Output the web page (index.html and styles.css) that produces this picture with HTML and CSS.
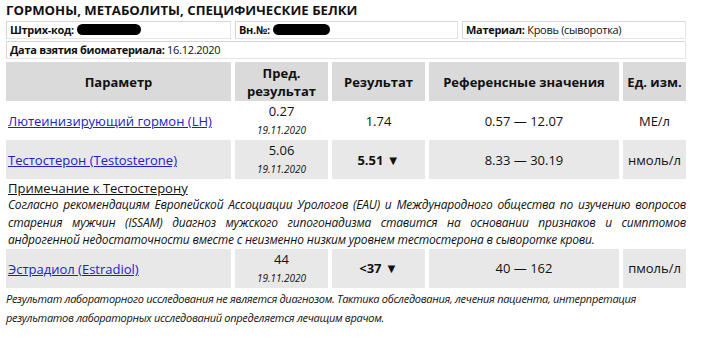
FILE: index.html
```html
<!DOCTYPE html>
<html lang="ru">
<head>
<meta charset="utf-8">
<link rel="stylesheet" href="styles.css">
</head>
<body>
<div class="page">
  <h1 class="title">ГОРМОНЫ, МЕТАБОЛИТЫ, СПЕЦИФИЧЕСКИЕ БЕЛКИ</h1>
  <div class="info">
    <div class="box"><b>Штрих-код:</b> <span class="redact r1"></span></div>
    <div class="box"><b>Вн.№:</b> <span class="redact r2"></span></div>
    <div class="box"><b>Материал:</b> Кровь (сыворотка)</div>
  </div>
  <div class="box wide"><b>Дата взятия биоматериала:</b> 16.12.2020</div>

  <div class="grid">
    <div class="hd">Параметр</div>
    <div class="hd">Пред.<br>результат</div>
    <div class="hd">Результат</div>
    <div class="hd">Референсные значения</div>
    <div class="hd">Ед. изм.</div>

    <div class="c name"><a href="#">Лютеинизирующий гормон (LH)</a></div>
    <div class="c prev"><span>0.27</span><i>19.11.2020</i></div>
    <div class="c">1.74</div>
    <div class="c">0.57 — 12.07</div>
    <div class="c">МЕ/л</div>

    <div class="c name g"><a href="#">Тестостерон (Testosterone)</a></div>
    <div class="c prev g"><span>5.06</span><i>19.11.2020</i></div>
    <div class="c g b">5.51 ▼</div>
    <div class="c g">8.33 — 30.19</div>
    <div class="c g">нмоль/л</div>
  </div>

  <div class="note">
    <div class="note-title">Примечание к Тестостерону</div>
    <p class="note-text">Согласно рекомендациям Европейской Ассоциации Урологов (EAU) и Международного общества по изучению вопросов старения мужчин (ISSAM) диагноз мужского гипогонадизма ставится на основании признаков и симптомов андрогенной недостаточности вместе с неизменно низким уровнем тестостерона в сыворотке крови.</p>
  </div>

  <div class="grid grid2">
    <div class="c name g"><a href="#">Эстрадиол (Estradiol)</a></div>
    <div class="c prev g"><span>44</span><i>19.11.2020</i></div>
    <div class="c g b">&lt;37 ▼</div>
    <div class="c g">40 — 162</div>
    <div class="c g">пмоль/л</div>
  </div>

  <p class="foot">Результат лабораторного исследования не является диагнозом. Тактика обследования, лечения пациента, интерпретация результатов лабораторных исследований определяется лечащим врачом.</p>
</div>
</body>
</html>
```

FILE: styles.css
```css
html, body {
  margin: 0;
  padding: 0;
  background: #fff;
}
*, *::before, *::after {
  box-sizing: border-box;
}
body {
  font-family: "Open Sans", "Noto Sans", sans-serif;
  color: #111;
  font-size: 12px;
}
.page {
  width: 686px;
  padding: 2px 0 0 6px;
}
.title {
  margin: 0;
  font-size: 13.2px;
  font-weight: 700;
  line-height: 16px;
  height: 19px;
}
.info {
  display: grid;
  grid-template-columns: 225px 223px 224px;
  column-gap: 4px;
  margin-bottom: 2px;
}
.box {
  border: 1px solid #d6d6d6;
  border-right-color: #e4e4e4;
  border-bottom-color: #e4e4e4;
  height: 18px;
  line-height: 16px;
  padding: 0 3px;
  font-size: 11px;
  letter-spacing: -0.3px;
  white-space: nowrap;
}
.box b { font-weight: 700; }
.wide {
  width: 680px;
}
.redact {
  display: inline-block;
  background: #000;
  border-radius: 7px;
  height: 11px;
  vertical-align: -1px;
  margin-left: 1px;
}
.r1 { width: 64px; }
.r2 { width: 57px; }

.grid {
  display: grid;
  grid-template-columns: 225px 93px 93px 190px 63px;
  column-gap: 4px;
  margin-top: 3px;
}
.hd {
  background: #dadada;
  height: 39px;
  display: flex;
  align-items: center;
  justify-content: center;
  text-align: center;
  font-weight: 700;
  font-size: 13px;
  line-height: 18px;
}
.c {
  height: 39px;
  display: flex;
  align-items: center;
  justify-content: center;
  font-size: 13px;
  text-align: center;
}
.c.g { background: #e8e8e8; }
.c.b { font-weight: 700; }
.c.name {
  justify-content: flex-start;
  padding-left: 2px;
  padding-top: 1px;
}
.c.name a {
  color: #2020d0;
  text-decoration: underline;
}
.c.prev {
  flex-direction: column;
  line-height: 16px;
}
.c.prev span {
  margin-bottom: 3px;
}
.c.prev i {
  font-size: 10px;
  line-height: 16px;
}
.note-title {
  font-size: 13px;
  text-decoration: underline;
  line-height: 16px;
  padding-left: 2px;
  padding-top: 1px;
}
.note-text {
  margin: 0;
  font-style: italic;
  font-size: 12px;
  line-height: 17.5px;
  text-align: justify;
  padding-left: 2px;
  letter-spacing: -0.2px;
}
.grid2 {
  margin-top: 0;
}
.foot {
  margin: 1px 0 0 0;
  font-style: italic;
  font-size: 11px;
  line-height: 19px;
  letter-spacing: -0.3px;
}
```
